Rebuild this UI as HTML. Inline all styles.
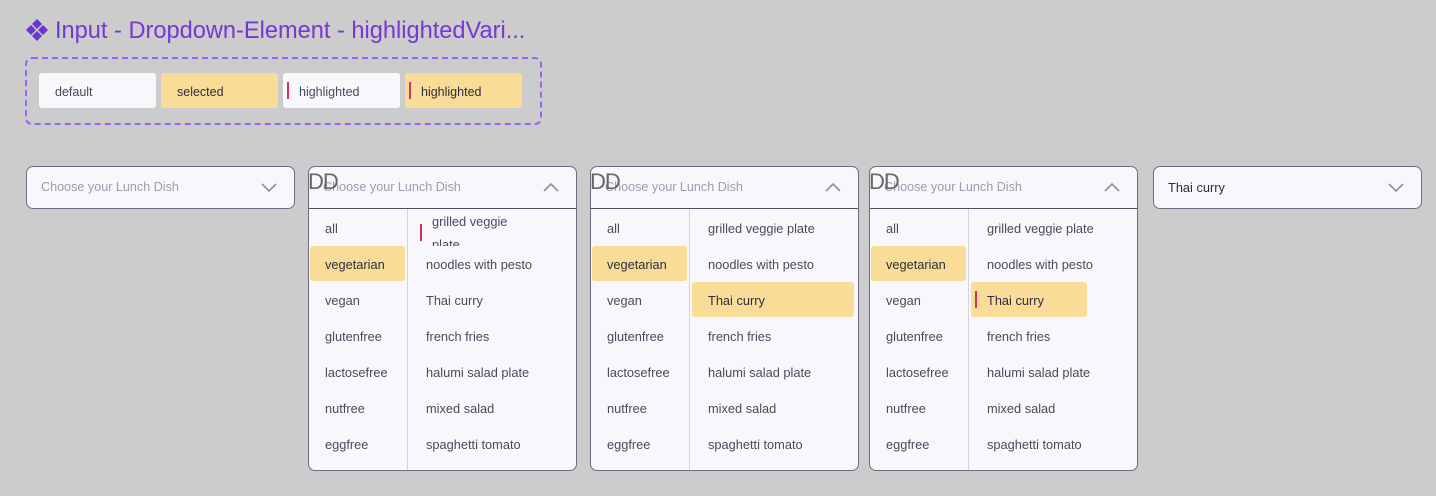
<!DOCTYPE html>
<html><head><style>
*{margin:0;padding:0;box-sizing:border-box}
body{width:1436px;height:496px;background:#cccccc;font-family:"Liberation Sans",sans-serif;position:relative;overflow:hidden}
.a{position:absolute}
.title{left:55px;top:18px;font-size:23.6px;color:#7438d4;white-space:nowrap}
.dash{left:25px;top:57px;width:517px;height:68px;border:2px dashed #9a66f0;border-radius:7px}
.chip{top:73px;height:35px;width:117px;border-radius:3px;background:#f7f7fc;font-size:12.5px;color:#4a4a5e;line-height:38px;padding-left:16px}
.y{background:#f9dc97;color:#2e2e3a}
.bar{position:absolute;left:4px;top:9px;width:2px;height:17px;background:#d2325c}
.dd{top:166px;width:269px;height:43px;border:1px solid #6e6c84;border-radius:7px;background:#f7f7fc}
.ph{position:absolute;left:14px;top:13px;font-size:12.6px;color:#9d9db0}
.chev{position:absolute;right:16px;top:14px}
.open{height:305px}
.hd{position:absolute;left:0;top:0;right:0;height:42px;border-bottom:1.5px solid #4e4c62}
.div{position:absolute;left:98px;top:42px;bottom:0;width:1px;background:#d4d4de}
.it{position:absolute;font-size:12.8px;color:#4a4a5e;height:35px;line-height:35px;white-space:nowrap}
.l{left:16px}
.r{left:117px}
.ddt{position:absolute;left:-1px;top:2px;font-size:22px;color:#666;letter-spacing:-1px}
</style></head><body>
<svg class="a" style="left:26px;top:19px" width="22" height="22" viewBox="0 0 22 22" fill="#6b35d1">
<path d="M11 0l5 5-5 5-5-5z"/><path d="M11 12l5 5-5 5-5-5z"/><path d="M5 6l5 5-5 5-5-5z"/><path d="M17 6l5 5-5 5-5-5z"/></svg>
<div class="a title">Input - Dropdown-Element - highlightedVari...</div>
<div class="a dash"></div>
<div class="a chip" style="left:39px">default</div>
<div class="a chip y" style="left:161px">selected</div>
<div class="a chip" style="left:283px"><span class="bar"></span>highlighted</div>
<div class="a chip y" style="left:405px"><span class="bar"></span>highlighted</div>

<div class="a dd" style="left:26px"><span class="ph">Choose your Lunch Dish</span>
<svg class="chev" width="18" height="12" viewBox="0 0 18 12"><path d="M2 3l7 7 7-7" fill="none" stroke="#8e8ea2" stroke-width="1.6"/></svg></div>

<!-- DD2 -->
<div class="a dd open" style="left:308px">
<div class="hd"></div><span class="ph">Choose your Lunch Dish</span>
<svg class="chev" width="18" height="12" viewBox="0 0 18 12"><path d="M2 10l7-7 7 7" fill="none" stroke="#8e8ea2" stroke-width="1.6"/></svg>
<span class="ddt">DD</span><div class="div"></div>
<div class="it l" style="top:44px">all</div>
<div class="a" style="left:1px;top:79px;width:95px;height:35px;background:#f9dc97;border-radius:3px"></div>
<div class="it l" style="top:80px;color:#2e2e3a">vegetarian</div>
<div class="it l" style="top:116px">vegan</div>
<div class="it l" style="top:152px">glutenfree</div>
<div class="it l" style="top:188px">lactosefree</div>
<div class="it l" style="top:224px">nutfree</div>
<div class="it l" style="top:260px">eggfree</div>
<div class="a" style="left:111px;top:57px;width:2px;height:17px;background:#d2325c"></div>
<div class="a" style="left:123px;top:43px;width:100px;height:36px;overflow:hidden;font-size:12.8px;color:#4a4a5e;line-height:23px">grilled veggie<br>plate</div>
<div class="it r" style="top:80px">noodles with pesto</div>
<div class="it r" style="top:116px">Thai curry</div>
<div class="it r" style="top:152px">french fries</div>
<div class="it r" style="top:188px">halumi salad plate</div>
<div class="it r" style="top:224px">mixed salad</div>
<div class="it r" style="top:260px">spaghetti tomato</div>
</div>

<!-- DD3 -->
<div class="a dd open" style="left:590px">
<div class="hd"></div><span class="ph">Choose your Lunch Dish</span>
<svg class="chev" width="18" height="12" viewBox="0 0 18 12"><path d="M2 10l7-7 7 7" fill="none" stroke="#8e8ea2" stroke-width="1.6"/></svg>
<span class="ddt">DD</span><div class="div"></div>
<div class="it l" style="top:44px">all</div>
<div class="a" style="left:1px;top:79px;width:95px;height:35px;background:#f9dc97;border-radius:3px"></div>
<div class="it l" style="top:80px;color:#2e2e3a">vegetarian</div>
<div class="it l" style="top:116px">vegan</div>
<div class="it l" style="top:152px">glutenfree</div>
<div class="it l" style="top:188px">lactosefree</div>
<div class="it l" style="top:224px">nutfree</div>
<div class="it l" style="top:260px">eggfree</div>
<div class="a" style="left:101px;top:115px;width:162px;height:35px;background:#f9dc97;border-radius:3px"></div>
<div class="it r" style="top:44px">grilled veggie plate</div>
<div class="it r" style="top:80px">noodles with pesto</div>
<div class="it r" style="top:116px;color:#2e2e3a">Thai curry</div>
<div class="it r" style="top:152px">french fries</div>
<div class="it r" style="top:188px">halumi salad plate</div>
<div class="it r" style="top:224px">mixed salad</div>
<div class="it r" style="top:260px">spaghetti tomato</div>
</div>

<!-- DD4 -->
<div class="a dd open" style="left:869px">
<div class="hd"></div><span class="ph">Choose your Lunch Dish</span>
<svg class="chev" width="18" height="12" viewBox="0 0 18 12"><path d="M2 10l7-7 7 7" fill="none" stroke="#8e8ea2" stroke-width="1.6"/></svg>
<span class="ddt">DD</span><div class="div"></div>
<div class="it l" style="top:44px">all</div>
<div class="a" style="left:1px;top:79px;width:95px;height:35px;background:#f9dc97;border-radius:3px"></div>
<div class="it l" style="top:80px;color:#2e2e3a">vegetarian</div>
<div class="it l" style="top:116px">vegan</div>
<div class="it l" style="top:152px">glutenfree</div>
<div class="it l" style="top:188px">lactosefree</div>
<div class="it l" style="top:224px">nutfree</div>
<div class="it l" style="top:260px">eggfree</div>
<div class="a" style="left:101px;top:115px;width:116px;height:35px;background:#f9dc97;border-radius:3px"></div>
<div class="a" style="left:105px;top:124px;width:2px;height:17px;background:#d2325c"></div>
<div class="it r" style="top:44px">grilled veggie plate</div>
<div class="it r" style="top:80px">noodles with pesto</div>
<div class="it r" style="top:116px;color:#2e2e3a">Thai curry</div>
<div class="it r" style="top:152px">french fries</div>
<div class="it r" style="top:188px">halumi salad plate</div>
<div class="it r" style="top:224px">mixed salad</div>
<div class="it r" style="top:260px">spaghetti tomato</div>
</div>

<div class="a dd" style="left:1153px"><span class="ph" style="color:#2e2e3a;font-size:12.8px;top:13px">Thai curry</span>
<svg class="chev" width="18" height="12" viewBox="0 0 18 12"><path d="M2 3l7 7 7-7" fill="none" stroke="#8e8ea2" stroke-width="1.6"/></svg></div>
</body></html>
